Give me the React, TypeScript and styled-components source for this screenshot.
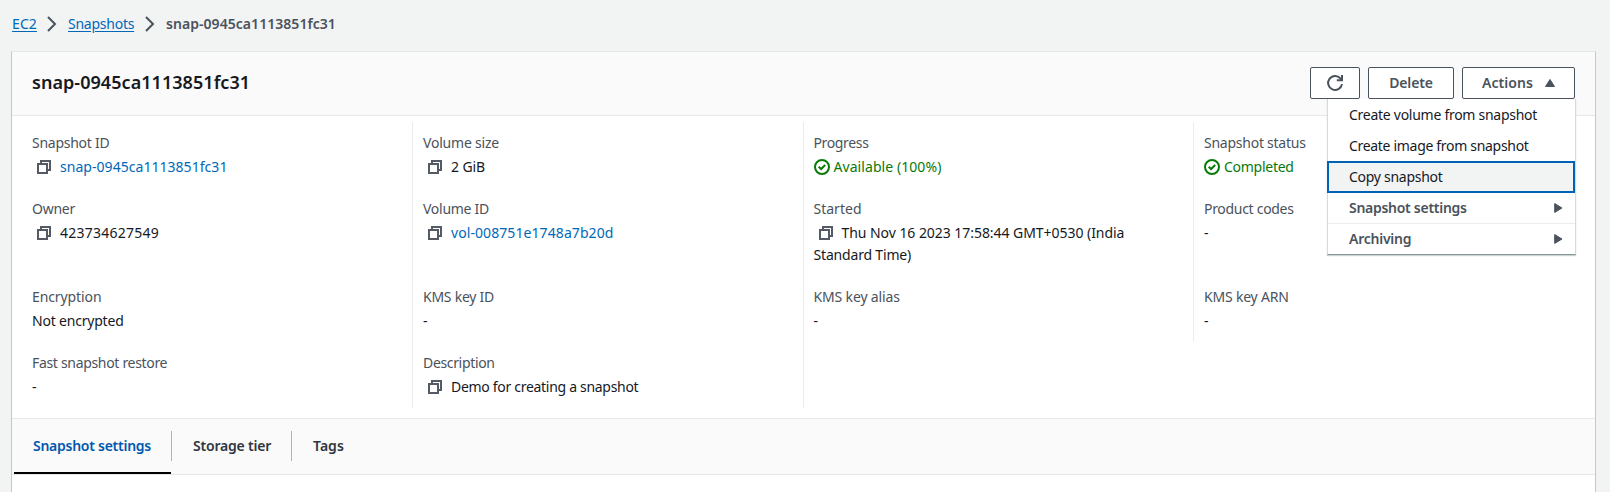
import React from 'react';
import styled, { createGlobalStyle, css } from 'styled-components';

const GlobalStyle = createGlobalStyle`
  *, *::before, *::after { box-sizing: border-box; }
  body {
    margin: 0;
    overflow: hidden;
    background: #f2f3f3;
    color: #16191f;
    font: 400 14px/22px "Noto Sans", "Open Sans", sans-serif;
  }
`;

const Page = styled.div`
  height: 492px;
  display: flex;
  flex-direction: column;
  padding: 0 14px 0 11px;
  overflow: hidden;
`;

const Text = styled.span<{ $track?: number }>`
  letter-spacing: ${(p) => p.$track ?? 0}px;
  white-space: nowrap;
`;

const Breadcrumbs = styled.nav`
  height: 51px;
  display: flex;
  align-items: flex-start;
  padding: 13px 0 0 1px;
`;

const Crumb = styled.a<{ $current?: boolean; $track: number; $width: number }>`
  width: ${(p) => p.$width}px;
  white-space: nowrap;
  letter-spacing: ${(p) => p.$track}px;
  ${(p) =>
    p.$current
      ? css`
          color: #4a525c;
          font-weight: 600;
        `
      : css`
          color: #0068b8;
          text-decoration: underline;
          text-underline-offset: 2px;
        `}
`;

const ChevronSlot = styled.span`
  display: flex;
  flex: none;
  width: 32px;
  padding: 3px 0 0 10px;
`;

const Panel = styled.main`
  flex: 1;
  display: flex;
  flex-direction: column;
  background: #fff;
  border: 1px solid #c3c8cb;
  border-top-color: #e6e8e8;
  border-bottom: 0;
`;

const PanelHeader = styled.header`
  height: 64px;
  flex: none;
  display: flex;
  justify-content: space-between;
  padding: 15px 20px 0 20px;
  background: #fafafa;
  border-bottom: 1px solid #e6e8e8;
`;

const Title = styled.h1`
  margin: 4px 0 0;
  font-size: 18px;
  line-height: 22px;
  font-weight: 600;
  letter-spacing: 0.05px;
`;

const ButtonRow = styled.div`
  display: flex;
  gap: 8px;
`;

const Button = styled.button<{ $width: number }>`
  width: ${(p) => p.$width}px;
  height: 32px;
  display: flex;
  align-items: center;
  justify-content: center;
  gap: 12px;
  padding: 0;
  border: 1px solid #4a535e;
  border-radius: 2px;
  background: #fff;
  color: #4a525c;
  font: inherit;
  font-weight: 600;
`;

const ActionsAnchor = styled.div`
  position: relative;
`;

const Menu = styled.ul`
  position: absolute;
  z-index: 2;
  top: 32px;
  right: -1px;
  width: 249px;
  margin: 0;
  padding: 0;
  list-style: none;
  background: #fff;
  border: 1px solid #d5dbdb;
  border-top: 0;
  border-bottom: 1px solid #879596;
  box-shadow: 0 1px 1px rgba(0, 28, 36, 0.2);
`;

const MenuItem = styled.li<{ $active?: boolean; $group?: boolean; $divided?: boolean }>`
  height: 31px;
  display: flex;
  align-items: center;
  justify-content: space-between;
  padding: 0 12px 0 21px;
  ${(p) =>
    p.$group &&
    css`
      color: #4a525c;
      font-weight: 600;
    `}
  ${(p) => p.$divided && 'border-top: 1px solid #eaeded;'}
  ${(p) =>
    p.$active &&
    css`
      height: 32px;
      margin: 0 0 -1px -1px;
      padding-left: 22px;
      background: #f2f3f3;
      box-shadow: inset 0 0 0 2px #0062b6;
    `}
`;

const Details = styled.section`
  flex: none;
  display: grid;
  grid-template-columns: repeat(4, 390.5px);
  padding: 6px 0 10px 10.5px;
`;

const Cell = styled.div<{ $ruled: boolean; $first: boolean }>`
  padding: 10px 10px 10px ${(p) => (p.$first ? 9.5 : 10)}px;
  border-right: 1px solid ${(p) => (p.$ruled ? '#eaeded' : 'transparent')};
`;

const Label = styled.div`
  color: #4a525c;
  margin-bottom: 2px;
`;

const Value = styled.div<{ $tone?: 'link' | 'success' }>`
  color: ${(p) => (p.$tone === 'link' ? '#0068b8' : p.$tone === 'success' ? '#087a08' : 'inherit')};
`;

const CopySvg = styled.svg`
  display: inline-block;
  vertical-align: -2px;
  margin: 0 9px 0 5px;
`;

const CheckSvg = styled.svg`
  display: inline-block;
  vertical-align: -3px;
  margin-right: 4px;
`;

const Tabs = styled.nav`
  flex: none;
  height: 57px;
  display: flex;
  padding-left: 2px;
  background: #fafafa;
  border-top: 1px solid #e6e8e8;
  border-bottom: 1px solid #e6e8e8;
`;

const Tab = styled.a<{ $active?: boolean; $width: number }>`
  width: ${(p) => p.$width}px;
  display: flex;
  flex-direction: column;
  padding-top: 12px;
  font-weight: 600;
  color: ${(p) => (p.$active ? '#0058b0' : '#2f363f')};
  border-bottom: 2px solid ${(p) => (p.$active ? '#000' : 'transparent')};
`;

const TabLabel = styled.span<{ $inset: number }>`
  height: 30px;
  display: flex;
  align-items: center;
  padding-left: ${(p) => p.$inset}px;
`;

const TabDivider = styled.span`
  flex: none;
  width: 1px;
  height: 30px;
  margin-top: 12px;
  background: #aab7b8;
`;

const Chevron = () => (
  <ChevronSlot>
    <svg width="11" height="16" viewBox="0 0 11 16" fill="none" stroke="#4a525c" strokeWidth="2">
      <path d="M2 1 9 8 2 15" />
    </svg>
  </ChevronSlot>
);

const CopyIcon = () => (
  <CopySvg width="14" height="14" viewBox="0 0 14 14" fill="none" stroke="#545b64" strokeWidth="2">
    <path d="M1 4h9v9H1z" />
    <path d="M4 4V1h9v9h-3" />
  </CopySvg>
);

const CheckIcon = () => (
  <CheckSvg width="16" height="16" viewBox="0 0 16 16" fill="none" stroke="#087a08" strokeWidth="2">
    <circle cx="8" cy="8" r="7" />
    <path d="m4.7 7.7 2.4 2.3 4.1-4" />
  </CheckSvg>
);

const RefreshIcon = () => (
  <svg width="18" height="18" viewBox="0 0 18 18" fill="none" stroke="#4a525c" strokeWidth="2">
    <path d="M16 10.2A7 7 0 1 1 14.4 4.4L15.6 6" />
    <path d="M16 1v5.2h-5.2" />
  </svg>
);

const CaretUp = () => (
  <svg width="10" height="8" viewBox="0 0 10 8" fill="#4a525c" stroke="#4a525c" strokeLinejoin="round">
    <path d="M5 .5 9.5 7.5H.5z" />
  </svg>
);

const CaretRight = () => (
  <svg width="9" height="10" viewBox="0 0 9 10" fill="#4a525c" stroke="#4a525c" strokeLinejoin="round">
    <path d="M.7.6 8 5 .7 9.4z" />
  </svg>
);

type Detail = {
  label: string;
  labelTrack: number;
  lines: [string, number][];
  icon?: 'copy' | 'check';
  tone?: 'link' | 'success';
};

const details: Detail[] = [
  { label: 'Snapshot ID', labelTrack: -0.26, lines: [['snap-0945ca1113851fc31', 0.04]], icon: 'copy', tone: 'link' },
  { label: 'Volume size', labelTrack: -0.21, lines: [['2 GiB', -0.11]], icon: 'copy' },
  { label: 'Progress', labelTrack: -0.36, lines: [['Available (100%)', 0.07]], icon: 'check', tone: 'success' },
  { label: 'Snapshot status', labelTrack: -0.25, lines: [['Completed', -0.27]], icon: 'check', tone: 'success' },
  { label: 'Owner', labelTrack: -0.25, lines: [['423734627549', 0.24]], icon: 'copy' },
  { label: 'Volume ID', labelTrack: -0.27, lines: [['vol-008751e1748a7b20d', 0.08]], icon: 'copy', tone: 'link' },
  {
    label: 'Started',
    labelTrack: 0.01,
    lines: [
      ['Thu Nov 16 2023 17:58:44 GMT+0530 (India', -0.05],
      ['Standard Time)', -0.18],
    ],
    icon: 'copy',
  },
  { label: 'Product codes', labelTrack: -0.3, lines: [['-', 0]] },
  { label: 'Encryption', labelTrack: -0.1, lines: [['Not encrypted', -0.2]] },
  { label: 'KMS key ID', labelTrack: -0.25, lines: [['-', 0]] },
  { label: 'KMS key alias', labelTrack: -0.15, lines: [['-', 0]] },
  { label: 'KMS key ARN', labelTrack: -0.2, lines: [['-', 0]] },
  { label: 'Fast snapshot restore', labelTrack: -0.32, lines: [['-', 0]] },
  { label: 'Description', labelTrack: -0.34, lines: [['Demo for creating a snapshot', -0.3]], icon: 'copy' },
];

export default function App() {
  return (
    <Page>
      <GlobalStyle />
      <Breadcrumbs>
        <Crumb $width={24} $track={0.1}>EC2</Crumb>
        <Chevron />
        <Crumb $width={66} $track={-0.25}>Snapshots</Crumb>
        <Chevron />
        <Crumb $width={170} $track={0.05} $current>snap-0945ca1113851fc31</Crumb>
      </Breadcrumbs>
      <Panel>
        <PanelHeader>
          <Title>snap-0945ca1113851fc31</Title>
          <ButtonRow>
            <Button $width={50} aria-label="Refresh"><RefreshIcon /></Button>
            <Button $width={86}><Text $track={-0.17}>Delete</Text></Button>
            <ActionsAnchor>
              <Button $width={113}>
                <Text $track={0.06}>Actions</Text>
                <CaretUp />
              </Button>
              <Menu>
                <MenuItem><Text $track={-0.27}>Create volume from snapshot</Text></MenuItem>
                <MenuItem><Text $track={-0.31}>Create image from snapshot</Text></MenuItem>
                <MenuItem $active><Text $track={-0.28}>Copy snapshot</Text></MenuItem>
                <MenuItem $group><Text $track={-0.28}>Snapshot settings</Text><CaretRight /></MenuItem>
                <MenuItem $group $divided><Text $track={-0.24}>Archiving</Text><CaretRight /></MenuItem>
              </Menu>
            </ActionsAnchor>
          </ButtonRow>
        </PanelHeader>
        <Details>
          {details.map((d, i) => (
            <Cell key={d.label} $ruled={i % 4 !== 3} $first={i % 4 === 0}>
              <Label><Text $track={d.labelTrack}>{d.label}</Text></Label>
              {d.lines.map(([line, track], n) => (
                <Value key={line} $tone={d.tone}>
                  {n === 0 && d.icon === 'copy' && <CopyIcon />}
                  {n === 0 && d.icon === 'check' && <CheckIcon />}
                  <Text $track={track}>{line}</Text>
                </Value>
              ))}
            </Cell>
          ))}
        </Details>
        <Tabs>
          <Tab $width={157} $active><TabLabel $inset={19}><Text $track={-0.26}>Snapshot settings</Text></TabLabel></Tab>
          <TabDivider />
          <Tab $width={119}><TabLabel $inset={21}><Text $track={-0.2}>Storage tier</Text></TabLabel></Tab>
          <TabDivider />
          <Tab $width={70}><TabLabel $inset={21}><Text $track={0.04}>Tags</Text></TabLabel></Tab>
        </Tabs>
      </Panel>
    </Page>
  );
}
